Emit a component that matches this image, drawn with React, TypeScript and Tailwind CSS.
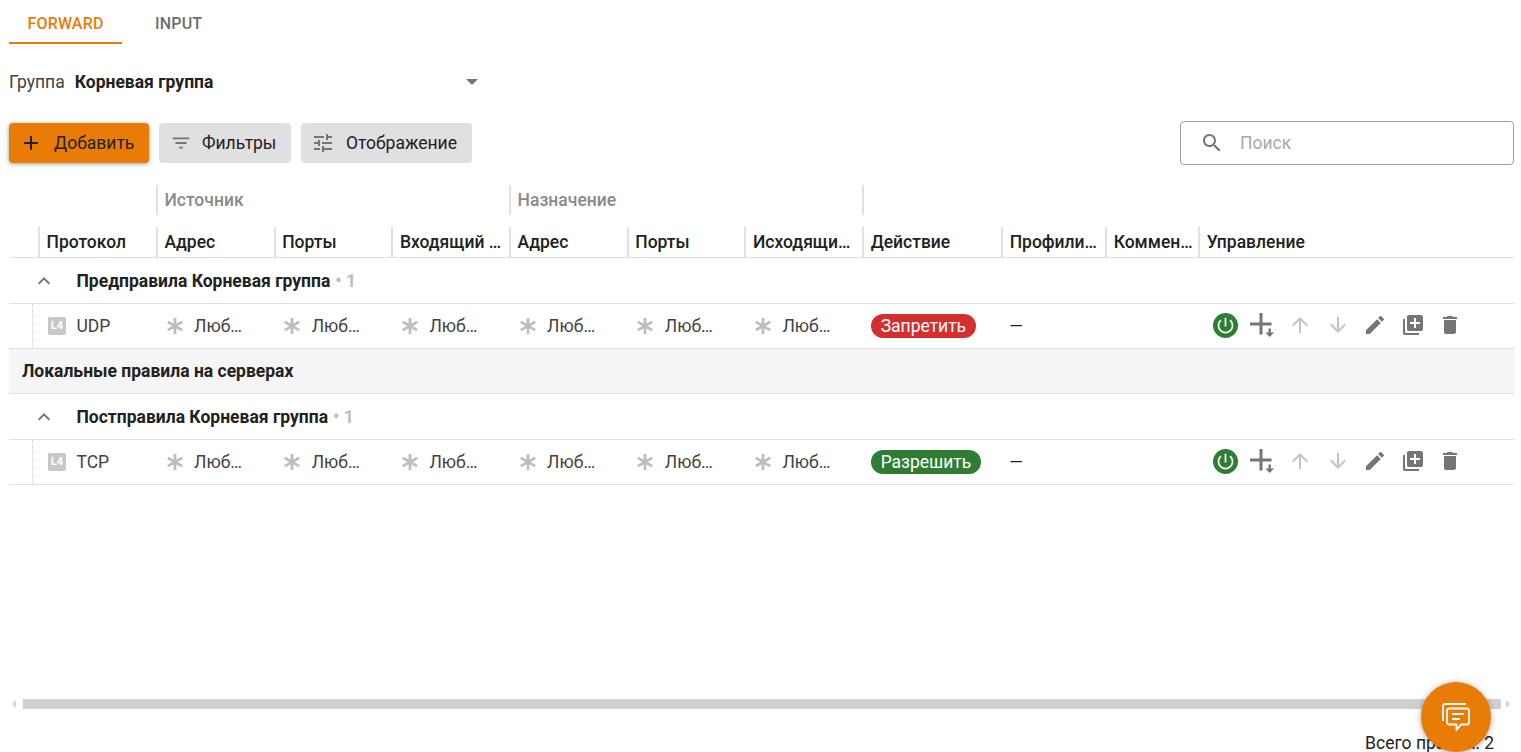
import React from "react";

const P = {
  power: "M13 3h-2v10h2V3zm4.83 2.17l-1.42 1.42C17.99 7.86 19 9.81 19 12c0 3.87-3.13 7-7 7s-7-3.13-7-7c0-2.19 1.01-4.14 2.58-5.42L6.17 5.17C4.23 6.82 3 9.26 3 12c0 4.97 4.03 9 9 9s9-4.03 9-9c0-2.74-1.23-5.18-3.17-6.83z",
  edit: "M3 17.25V21h3.75L17.81 9.94l-3.75-3.75L3 17.25zM20.71 7.04c.39-.39.39-1.02 0-1.41l-2.34-2.34c-.39-.39-1.02-.39-1.41 0l-1.83 1.83 3.75 3.75 1.83-1.83z",
  lib: "M4 6H2v14c0 1.1.9 2 2 2h14v-2H4V6zm16-4H8c-1.1 0-2 .9-2 2v12c0 1.1.9 2 2 2h12c1.1 0 2-.9 2-2V4c0-1.1-.9-2-2-2zm-1 9h-4v4h-2v-4H9V9h4V5h2v4h4v2z",
  del: "M6 19c0 1.1.9 2 2 2h8c1.1 0 2-.9 2-2V7H6v12zM19 4h-3.5l-1-1h-5l-1 1H5v2h14V4z",
  up: "M4 12l1.41 1.41L11 7.83V20h2V7.83l5.58 5.59L20 12l-8-8-8 8z",
  down: "M20 12l-1.41-1.41L13 16.17V4h-2v12.17l-5.58-5.59L4 12l8 8 8-8z",
  search: "M15.5 14h-.79l-.28-.27C15.41 12.59 16 11.11 16 9.5 16 5.91 13.09 3 9.5 3S3 5.91 3 9.5 5.91 16 9.5 16c1.61 0 3.09-.59 4.23-1.57l.27.28v.79l5 4.99L20.49 19l-4.99-5zm-6 0C7.01 14 5 11.99 5 9.5S7.01 5 9.5 5 14 7.01 14 9.5 11.99 14 9.5 14z",
  filter: "M10 18h4v-2h-4v2zM3 6v2h18V6H3zm3 7h12v-2H6v2z",
  tune: "M3 17v2h6v-2H3zM3 5v2h10V5H3zm10 16v-2h8v-2h-8v-2h-2v6h2zM7 9v2H3v2h4v2h2V9H7zm14 4v-2H11v2h10zm-6-4h2V7h4V5h-4V3h-2v6z",
  add: "M19 13h-6v6h-2v-6H5v-2h6V5h2v6h6v2z",
  less: "M12 8l-6 6 1.41 1.41L12 10.83l4.59 4.58L18 14z",
  plusDown: "M9.5 0h3v9.5h9v3h-9v9h-3v-9H0v-3h9.5zM18.5 15.5h2.4v4H24L19.7 24l-4.3-4.5h3.1z",
};

const grid =
  "grid grid-cols-[29px_118px_117.7px_117.7px_117.7px_117.7px_117.7px_117.7px_139px_104px_93px_1fr]";

function Icon({ d, className }: { d: string; className: string }) {
  return (
    <svg viewBox="0 0 24 24" className={className} fill="currentColor">
      <path d={d} />
    </svg>
  );
}

function Star() {
  return (
    <svg viewBox="0 0 18 18" className="w-[18px] h-[18px] shrink-0 text-[#bdbdbd]" stroke="currentColor" strokeWidth="2.8">
      <path d="M9 1v16M1.8 4.9l14.4 8.2M16.2 4.9L1.8 13.1" />
    </svg>
  );
}

function HeadCell({ label }: { label: string }) {
  return (
    <div className="h-[30px] border-l-2 border-[#e0e0e0] pl-[6.5px] flex items-center whitespace-nowrap overflow-hidden font-medium text-[#212121]">
      {label}
    </div>
  );
}

function AnyCell() {
  return (
    <div className="flex items-center pl-[9.5px] gap-[10.5px]">
      <Star />
      <span className="text-[#424242]">Люб…</span>
    </div>
  );
}

function GroupRow({ title }: { title: string }) {
  return (
    <div className="h-[46px] border-b border-[#e0e0e0] flex items-center pt-[1px]">
      <Icon d={P.less} className="w-[24px] h-[24px] ml-[23px] text-[#757575]" />
      <span className="ml-[20.5px] font-bold text-[#212121]">{title}</span>
      <span className="ml-[5px] font-bold text-[#bdbdbd]">• 1</span>
    </div>
  );
}

function Actions() {
  return (
    <div className="flex items-center pl-[8.5px] pb-[2px]">
      <div className="w-[37.5px] flex justify-center">
        <div className="w-[25px] h-[25px] rounded-full bg-[#2e7d32] flex items-center justify-center">
          <Icon d={P.power} className="w-[21px] h-[21px] text-white" />
        </div>
      </div>
      <div className="w-[37.5px] flex justify-center pr-[1.5px]">
        <Icon d={P.plusDown} className="w-[24px] h-[24px] text-[#757575]" />
      </div>
      <div className="w-[37.5px] flex justify-center">
        <Icon d={P.up} className="w-[24px] h-[24px] text-[#c4c4c4]" />
      </div>
      <div className="w-[37.5px] flex justify-center">
        <Icon d={P.down} className="w-[24px] h-[24px] text-[#c4c4c4]" />
      </div>
      <div className="w-[37.5px] flex justify-center">
        <Icon d={P.edit} className="w-[24px] h-[24px] text-[#757575]" />
      </div>
      <div className="w-[37.5px] flex justify-center">
        <Icon d={P.lib} className="w-[24px] h-[24px] text-[#757575]" />
      </div>
      <div className="w-[37.5px] flex justify-center">
        <Icon d={P.del} className="w-[24px] h-[24px] text-[#757575]" />
      </div>
    </div>
  );
}

function Row({ proto, action, color }: { proto: string; action: string; color: string }) {
  return (
    <div className={`${grid} h-[45px] border-b border-[#e0e0e0]`}>
      <div className="ml-[23px] border-l border-dotted border-[#cfcfcf]" />
      <div className="flex items-center pl-[10px] gap-[10.5px]">
        <div className="w-[18px] h-[18px] rounded-[2px] bg-[#c8c8c8] text-white text-[11px] leading-[18px] font-bold text-center">L4</div>
        <span className="text-[#424242]">{proto}</span>
      </div>
      <AnyCell />
      <AnyCell />
      <AnyCell />
      <AnyCell />
      <AnyCell />
      <AnyCell />
      <div className="flex items-center pl-[9px]">
        <span className={`${color} h-[24px] rounded-full px-[9.5px] text-white leading-[24px]`}>{action}</span>
      </div>
      <div className="flex items-center pl-[8px] text-[#212121]">—</div>
      <div />
      <Actions />
    </div>
  );
}

export default function App() {
  return (
    <div className="relative h-[752px] overflow-hidden bg-white pl-[9px] pr-[7px] flex flex-col text-[17.5px] font-['Roboto',sans-serif] text-[#212121]">
      <div className="h-[44px] flex items-stretch shrink-0 text-[16px] tracking-[0.2px] font-medium">
        <div className="w-[113px] border-b-2 border-[#e87c07] text-[#e87c07] flex items-center justify-center pt-[6px]">FORWARD</div>
        <div className="ml-[33px] text-[#6d6d6d] flex items-center pt-[4px]">INPUT</div>
      </div>

      <div className="mt-[26px] h-[24px] w-[476px] flex items-center shrink-0">
        <span className="text-[#424242]">Группа</span>
        <span className="ml-[10px] font-bold text-[#212121]">Корневая группа</span>
        <span className="ml-auto mr-[7px] w-0 h-0 border-x-[6px] border-x-transparent border-t-[6px] border-t-[#757575]" />
      </div>

      <div className="mt-[27px] h-[44px] flex items-center shrink-0">
        <button className="h-[40px] w-[140px] rounded-[4px] bg-[#e87c07] shadow-[0_1px_4px_rgba(0,0,0,0.4)] flex items-center pl-[10px] text-[#212121]">
          <Icon d={P.add} className="w-[24px] h-[24px]" />
          <span className="ml-[11px]">Добавить</span>
        </button>
        <button className="ml-[10px] h-[40px] w-[132px] rounded-[4px] bg-[#e0e0e0] flex items-center pl-[11px] text-[#212121]">
          <Icon d={P.filter} className="w-[22px] h-[22px] text-[#757575]" />
          <span className="ml-[10px]">Фильтры</span>
        </button>
        <button className="ml-[10px] h-[40px] w-[171px] rounded-[4px] bg-[#e0e0e0] flex items-center pl-[10px] text-[#212121]">
          <Icon d={P.tune} className="w-[24px] h-[24px] text-[#757575]" />
          <span className="ml-[11px]">Отображение</span>
        </button>
        <div className="ml-auto w-[334px] h-[44px] rounded-[4px] border border-[#9e9e9e] flex items-center pl-[19px]">
          <Icon d={P.search} className="w-[24px] h-[24px] text-[#757575]" />
          <span className="ml-[16px] text-[#a8a8a8]">Поиск</span>
        </div>
      </div>

      <div className={`${grid} mt-[20px] shrink-0`}>
        <div className="col-span-2" />
        <div className="col-span-3 h-[30px] border-l-2 border-[#e0e0e0] pl-[6.5px] flex items-center font-medium text-[#8a8a8a]">Источник</div>
        <div className="col-span-3 h-[30px] border-l-2 border-[#e0e0e0] pl-[6.5px] flex items-center font-medium text-[#8a8a8a]">Назначение</div>
        <div className="h-[30px] border-l-2 border-[#e0e0e0]" />
      </div>

      <div className={`${grid} mt-[12px] border-b border-[#e0e0e0] shrink-0`}>
        <div />
        <HeadCell label="Протокол" />
        <HeadCell label="Адрес" />
        <HeadCell label="Порты" />
        <HeadCell label="Входящий …" />
        <HeadCell label="Адрес" />
        <HeadCell label="Порты" />
        <HeadCell label="Исходящи…" />
        <HeadCell label="Действие" />
        <HeadCell label="Профили…" />
        <HeadCell label="Коммен…" />
        <HeadCell label="Управление" />
      </div>

      <GroupRow title="Предправила Корневая группа" />
      <Row proto="UDP" action="Запретить" color="bg-[#d32f2f]" />
      <div className="h-[45px] bg-[#f5f5f5] border-b border-[#e0e0e0] flex items-center pl-[13px] font-bold text-[#212121]">
        Локальные правила на серверах
      </div>
      <GroupRow title="Постправила Корневая группа" />
      <Row proto="TCP" action="Разрешить" color="bg-[#2e7d32]" />

      <div className="mt-auto h-[10px] flex items-center shrink-0">
        <span className="ml-[3px] w-0 h-0 border-y-[4px] border-y-transparent border-r-[4px] border-r-[#d4d4d4]" />
        <div className="ml-[7px] flex-1 h-[10px] bg-[#d0d0d0]" />
        <span className="ml-[5px] mr-[4px] w-0 h-0 border-y-[4px] border-y-transparent border-l-[4px] border-l-[#d4d4d4]" />
      </div>

      <div className="mt-[26px] h-[17px] pr-[20px] text-right leading-[17px] shrink-0 text-[#212121]">Всего правил: 2</div>

      <button className="absolute left-[1421px] top-[682px] w-[70px] h-[70px] rounded-full bg-[#e87c07] shadow-[0_1px_6px_rgba(0,0,0,0.35)] flex items-center justify-center">
        <svg viewBox="0 0 28 28" className="w-[28px] h-[28px]" fill="none" stroke="white" strokeWidth="1.8">
          <path d="M24 1H3a2 2 0 0 0-2 2v15" />
          <path d="M7 5.5h18a2 2 0 0 1 2 2v12a2 2 0 0 1-2 2h-6l-4.5 5.5v-5.5H7a2 2 0 0 1-2-2v-12a2 2 0 0 1 2-2z" />
          <path d="M10 11h12M10 16h8" strokeWidth="2" />
        </svg>
      </button>
    </div>
  );
}
